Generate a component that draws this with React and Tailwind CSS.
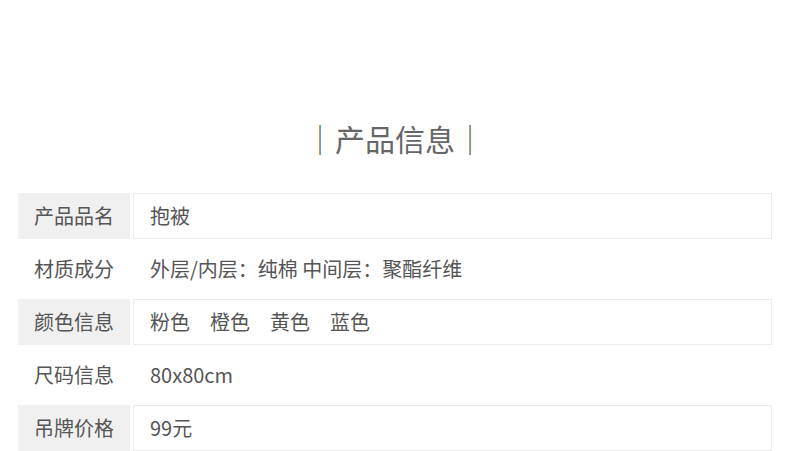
export default function App() {
  const rows = [
    { label: "产品品名", value: "抱被", shaded: true },
    { label: "材质成分", value: "外层/内层：纯棉 中间层：聚酯纤维", shaded: false },
    { label: "颜色信息", value: ["粉色", "橙色", "黄色", "蓝色"], shaded: true },
    { label: "尺码信息", value: "80x80cm", shaded: false },
    { label: "吊牌价格", value: "99元", shaded: true },
  ];
  return (
    <div
      className="w-[790px] h-[451px] bg-white overflow-hidden px-[18px]"
      style={{ fontFamily: '"Noto Sans CJK SC", "Noto Sans", sans-serif' }}
    >
      <div className="mt-[116px] h-[45px] leading-[45px] text-center text-[30px] text-[#666666]">
        ｜产品信息｜
      </div>
      <div className="mt-[32px] flex flex-col gap-[7px]">
        {rows.map((r) => (
          <div key={r.label} className="flex gap-[3px] h-[46px]">
            <div
              className={
                "w-[112px] h-[46px] flex items-center pl-[16px] text-[20px] text-[#555555] " +
                (r.shaded ? "bg-[#f0f0f0]" : "")
              }
            >
              {r.label}
            </div>
            <div
              className={
                "flex-1 h-[46px] flex items-center pl-[16px] text-[20px] text-[#555555] border " +
                (r.shaded ? "border-[#ebebeb]" : "border-transparent")
              }
            >
              {Array.isArray(r.value) ? (
                <div className="flex gap-[20px]">
                  {r.value.map((v) => (
                    <span key={v}>{v}</span>
                  ))}
                </div>
              ) : (
                r.value
              )}
            </div>
          </div>
        ))}
      </div>
    </div>
  );
}
